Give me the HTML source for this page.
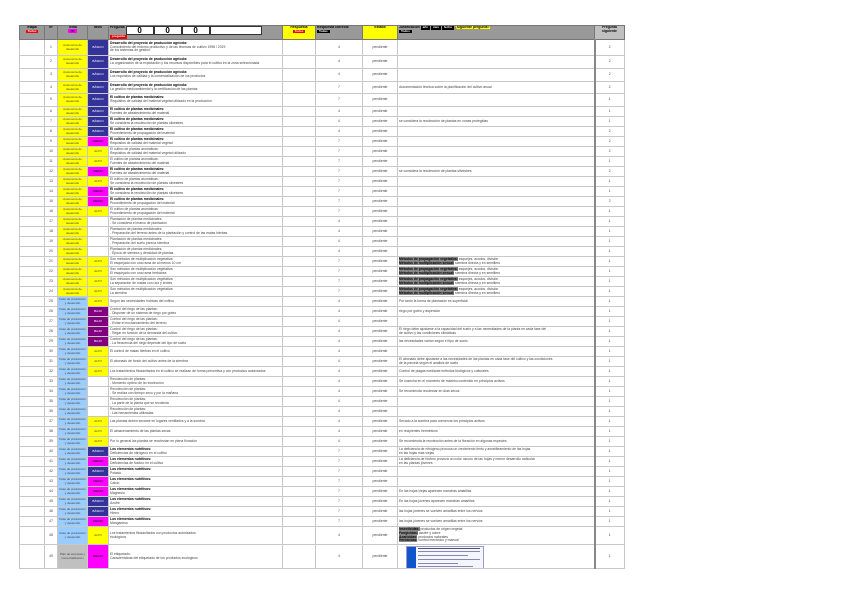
<!DOCTYPE html>
<html><head><meta charset="utf-8">
<style>
body{margin:0;width:848px;height:599px;background:#fff;font-family:"Liberation Sans",sans-serif;overflow:hidden;position:relative}
table{position:absolute;left:19px;top:25px;border-collapse:collapse;table-layout:fixed;border:1px solid #666}
td{border:1px solid #c8c8c8;padding:0 1px;font-size:3.4px;line-height:3.7px;color:#444;overflow:hidden;vertical-align:middle}
td.c{text-align:center}
tr.h td{background:#999;height:13px;color:#000;font-weight:bold;vertical-align:top;border-color:#777;line-height:3.6px}
tr.h td.y{background:#ff0}
tr.h td.g{background:#c0c0c0}
.ty{background:#ff0;text-align:center;font-size:3px}
.tb{background:#99ccff;text-align:center;font-size:3px}
.tg{background:#c0c0c0;text-align:center;font-size:3px}
.nb{background:#333399;color:#fff;text-align:center;font-size:3px}
.nm{background:#ff00ff;color:#000;text-align:center;font-size:3px}
.ny{background:#ff0;text-align:center;font-size:3px}
.np{background:#800080;color:#fff;text-align:center;font-size:3px}
.nw{background:#fff}
td.last{border-left:2px solid #888}
b{color:#000}
td b.j{background:#888}
.k{display:inline-block;background:#000;color:#fff;font-size:3px;padding:0 2px}
.r{display:inline-block;background:#e00;color:#fff;font-size:3px;padding:0 2px}
.bx{display:inline-block;border:1px solid #333;background:#fff;width:26px;height:7px;font-size:8px;line-height:7px;text-align:center;font-weight:bold;vertical-align:top}
</style></head><body>
<table>
<colgroup><col style="width:25px"><col style="width:13px"><col style="width:30px"><col style="width:21px"><col style="width:174px"><col style="width:33px"><col style="width:47px"><col style="width:35px"><col style="width:197px"><col style="width:30px"></colgroup>
<tr class="h"><td class="c">Etapa<br><span class="r">Todos</span></td><td class="c">Nº</td><td class="c">Tema<br><span class="nm" style="padding:0 3px">(T)</span></td><td class="c">Nivel</td><td>Pregunta <span class="bx">0</span><span class="bx">0</span><span class="bx">0</span><span class="bx" style="width:50px"></span><br><span class="r">pregunta</span></td><td class="y c">Respuesta<br><span class="r">Todos</span></td><td>Respuesta correcta<br><span class="k">Todas</span></td><td class="y c">Estado</td><td>Justificación <span class="k">año</span> <span class="k">mes</span> <span class="k">fecha</span> <span style="background:#ff0">¿Siguiente pregunta?</span><br><span class="k">Todos</span></td><td class="g c">Pregunta siguiente</td></tr>
<tr style="height:16px"><td></td><td class="c">1</td><td class="ty">Autonomía de desarrollo</td><td class="nb">BÁSICO</td><td><b>Desarrollo del proyecto de producción agrícola:</b><br>Conocimiento del entorno productivo y de las técnicas de cultivo 1998 / 2019<br>de los sistemas de gestión</td><td></td><td class="c">4</td><td class="c">pendiente</td><td></td><td class="c last">2</td></tr>
<tr style="height:13px"><td></td><td class="c">2</td><td class="ty">Autonomía de desarrollo</td><td class="nb">BÁSICO</td><td><b>Desarrollo del proyecto de producción agrícola:</b><br>La organización de la explotación y los recursos disponibles para el cultivo en la zona seleccionada</td><td></td><td class="c">4</td><td class="c">pendiente</td><td></td><td class="c last">2</td></tr>
<tr style="height:13px"><td></td><td class="c">3</td><td class="ty">Autonomía de desarrollo</td><td class="nb">BÁSICO</td><td><b>Desarrollo del proyecto de producción agrícola:</b><br>Los requisitos de calidad y la comercialización de los productos</td><td></td><td class="c">4</td><td class="c">pendiente</td><td></td><td class="c last">2</td></tr>
<tr style="height:12px"><td></td><td class="c">4</td><td class="ty">Autonomía de desarrollo</td><td class="nb">BÁSICO</td><td><b>Desarrollo del proyecto de producción agrícola:</b><br>La gestión medioambiental y la certificación de las plantas</td><td></td><td class="c">7</td><td class="c">pendiente</td><td>documentación técnica sobre la planificación del cultivo anual</td><td class="c last">2</td></tr>
<tr style="height:13px"><td></td><td class="c">5</td><td class="ty">Autonomía de desarrollo</td><td class="nb">BÁSICO</td><td><b>El cultivo de plantas medicinales:</b><br>Requisitos de calidad del material vegetal utilizado en la producción</td><td></td><td class="c">7</td><td class="c">pendiente</td><td></td><td class="c last">1</td></tr>
<tr style="height:10px"><td></td><td class="c">6</td><td class="ty">Autonomía de desarrollo</td><td class="nb">BÁSICO</td><td><b>El cultivo de plantas medicinales:</b><br>Fuentes de abastecimiento del material</td><td></td><td class="c">4</td><td class="c">pendiente</td><td></td><td class="c last">1</td></tr>
<tr style="height:10px"><td></td><td class="c">7</td><td class="ty">Autonomía de desarrollo</td><td class="nb">BÁSICO</td><td><b>El cultivo de plantas medicinales:</b><br>Se considera la recolección de plantas silvestres</td><td></td><td class="c">4</td><td class="c">pendiente</td><td>se considera la recolección de plantas en zonas protegidas</td><td class="c last">1</td></tr>
<tr style="height:10px"><td></td><td class="c">8</td><td class="ty">Autonomía de desarrollo</td><td class="nb">BÁSICO</td><td><b>El cultivo de plantas medicinales:</b><br>Procedimiento de propagación del material</td><td></td><td class="c">4</td><td class="c">pendiente</td><td></td><td class="c last">2</td></tr>
<tr style="height:10px"><td></td><td class="c">9</td><td class="ty">Autonomía de desarrollo</td><td class="nm">MEDIO</td><td><b>El cultivo de plantas medicinales:</b><br>Requisitos de calidad del material vegetal</td><td></td><td class="c">7</td><td class="c">pendiente</td><td></td><td class="c last">2</td></tr>
<tr style="height:10px"><td></td><td class="c">10</td><td class="ty">Autonomía de desarrollo</td><td class="ny">ALTO</td><td>El cultivo de plantas aromáticas:<br>Requisitos de calidad del material vegetal utilizado</td><td></td><td class="c">7</td><td class="c">pendiente</td><td></td><td class="c last">2</td></tr>
<tr style="height:10px"><td></td><td class="c">11</td><td class="ty">Autonomía de desarrollo</td><td class="ny">ALTO</td><td>El cultivo de plantas aromáticas:<br>Fuentes de abastecimiento del material</td><td></td><td class="c">7</td><td class="c">pendiente</td><td></td><td class="c last">1</td></tr>
<tr style="height:10px"><td></td><td class="c">12</td><td class="ty">Autonomía de desarrollo</td><td class="nm">MEDIO</td><td><b>El cultivo de plantas medicinales:</b><br>Fuentes de abastecimiento del material</td><td></td><td class="c">7</td><td class="c">pendiente</td><td>se considera la recolección de plantas silvestres</td><td class="c last">2</td></tr>
<tr style="height:10px"><td></td><td class="c">13</td><td class="ty">Autonomía de desarrollo</td><td class="ny">ALTO</td><td>El cultivo de plantas aromáticas:<br>Se considera la recolección de plantas silvestres</td><td></td><td class="c">7</td><td class="c">pendiente</td><td></td><td class="c last">1</td></tr>
<tr style="height:10px"><td></td><td class="c">14</td><td class="ty">Autonomía de desarrollo</td><td class="nm">MEDIO</td><td><b>El cultivo de plantas medicinales:</b><br>Se considera la recolección de plantas silvestres</td><td></td><td class="c">7</td><td class="c">pendiente</td><td></td><td class="c last">1</td></tr>
<tr style="height:10px"><td></td><td class="c">15</td><td class="ty">Autonomía de desarrollo</td><td class="nm">MEDIO</td><td><b>El cultivo de plantas medicinales:</b><br>Procedimiento de propagación del material</td><td></td><td class="c">7</td><td class="c">pendiente</td><td></td><td class="c last">2</td></tr>
<tr style="height:10px"><td></td><td class="c">16</td><td class="ty">Autonomía de desarrollo</td><td class="ny">ALTO</td><td>El cultivo de plantas aromáticas:<br>Procedimiento de propagación del material</td><td></td><td class="c">7</td><td class="c">pendiente</td><td></td><td class="c last">1</td></tr>
<tr style="height:10px"><td></td><td class="c">17</td><td class="ty">Autonomía de desarrollo</td><td class="nw"></td><td>Plantación de plantas medicinales:<br>- Se considera el marco de plantación</td><td></td><td class="c">4</td><td class="c">pendiente</td><td></td><td class="c last">1</td></tr>
<tr style="height:10px"><td></td><td class="c">18</td><td class="ty">Autonomía de desarrollo</td><td class="nw"></td><td>Plantación de plantas medicinales:<br>- Preparación del terreno antes de la plantación y control de las malas hierbas</td><td></td><td class="c">4</td><td class="c">pendiente</td><td></td><td class="c last">1</td></tr>
<tr style="height:10px"><td></td><td class="c">19</td><td class="ty">Autonomía de desarrollo</td><td class="nw"></td><td>Plantación de plantas medicinales:<br>- Preparación del suelo para la siembra</td><td></td><td class="c">4</td><td class="c">pendiente</td><td></td><td class="c last">1</td></tr>
<tr style="height:10px"><td></td><td class="c">20</td><td class="ty">Autonomía de desarrollo</td><td class="nw"></td><td>Plantación de plantas medicinales:<br>- Época de siembra y densidad de plantas</td><td></td><td class="c">4</td><td class="c">pendiente</td><td></td><td class="c last">1</td></tr>
<tr style="height:10px"><td></td><td class="c">21</td><td class="ty">Autonomía de desarrollo</td><td class="ny">ALTO</td><td>Son métodos de multiplicación vegetativa:<br>El esquejado con una rama de al menos 10 cm</td><td></td><td class="c">7</td><td class="c">pendiente</td><td><b class="j">Métodos de propagación vegetativa:</b> esquejes, acodos, división<br><b class="j">Métodos de multiplicación sexual:</b> siembra directa y en semillero</td><td class="c last">1</td></tr>
<tr style="height:10px"><td></td><td class="c">22</td><td class="ty">Autonomía de desarrollo</td><td class="ny">ALTO</td><td>Son métodos de multiplicación vegetativa:<br>El esquejado con una rama herbácea</td><td></td><td class="c">7</td><td class="c">pendiente</td><td><b class="j">Métodos de propagación vegetativa:</b> esquejes, acodos, división<br><b class="j">Métodos de multiplicación sexual:</b> siembra directa y en semillero</td><td class="c last">1</td></tr>
<tr style="height:10px"><td></td><td class="c">23</td><td class="ty">Autonomía de desarrollo</td><td class="ny">ALTO</td><td>Son métodos de multiplicación vegetativa:<br>La separación de matas con raíz y brotes</td><td></td><td class="c">7</td><td class="c">pendiente</td><td><b class="j">Métodos de propagación vegetativa:</b> esquejes, acodos, división<br><b class="j">Métodos de multiplicación sexual:</b> siembra directa y en semillero</td><td class="c last">1</td></tr>
<tr style="height:10px"><td></td><td class="c">24</td><td class="ty">Autonomía de desarrollo</td><td class="ny">ALTO</td><td>Son métodos de multiplicación vegetativa:<br>La siembra</td><td></td><td class="c">7</td><td class="c">pendiente</td><td><b class="j">Métodos de propagación vegetativa:</b> esquejes, acodos, división<br><b class="j">Métodos de multiplicación sexual:</b> siembra directa y en semillero</td><td class="c last">1</td></tr>
<tr style="height:10px"><td></td><td class="c">25</td><td class="tb">Fase de producción y desarrollo</td><td class="ny">ALTO</td><td>Según las necesidades hídricas del cultivo</td><td></td><td class="c">4</td><td class="c">pendiente</td><td>Por tanto la forma de plantación es superficial</td><td class="c last">1</td></tr>
<tr style="height:10px"><td></td><td class="c">26</td><td class="tb">Fase de producción y desarrollo</td><td class="np">BAJO</td><td>Control del riego de las plantas:<br>- Disponer de un sistema de riego por goteo</td><td></td><td class="c">4</td><td class="c">pendiente</td><td>riego por goteo y aspersión</td><td class="c last">1</td></tr>
<tr style="height:10px"><td></td><td class="c">27</td><td class="tb">Fase de producción y desarrollo</td><td class="np">BAJO</td><td>Control del riego de las plantas:<br>- Evitar el encharcamiento del terreno</td><td></td><td class="c">4</td><td class="c">pendiente</td><td></td><td class="c last">1</td></tr>
<tr style="height:10px"><td></td><td class="c">28</td><td class="tb">Fase de producción y desarrollo</td><td class="np">BAJO</td><td>Control del riego de las plantas:<br>- Regar en función de la demanda del cultivo</td><td></td><td class="c">4</td><td class="c">pendiente</td><td>El riego debe ajustarse a la capacidad del suelo y a las necesidades de la planta en cada fase del<br>de cultivo y las condiciones climáticas</td><td class="c last">1</td></tr>
<tr style="height:10px"><td></td><td class="c">29</td><td class="tb">Fase de producción y desarrollo</td><td class="np">BAJO</td><td>Control del riego de las plantas:<br>- La frecuencia del riego depende del tipo de suelo</td><td></td><td class="c">4</td><td class="c">pendiente</td><td>las necesidades varían según el tipo de suelo</td><td class="c last">1</td></tr>
<tr style="height:10px"><td></td><td class="c">30</td><td class="tb">Fase de producción y desarrollo</td><td class="ny">ALTO</td><td>El control de malas hierbas en el cultivo</td><td></td><td class="c">4</td><td class="c">pendiente</td><td></td><td class="c last">1</td></tr>
<tr style="height:10px"><td></td><td class="c">31</td><td class="tb">Fase de producción y desarrollo</td><td class="ny">ALTO</td><td>El abonado de fondo del cultivo antes de la siembra</td><td></td><td class="c">4</td><td class="c">pendiente</td><td>El abonado debe ajustarse a las necesidades de las plantas en cada fase del cultivo y las condiciones<br>de la parcela según el análisis de suelo</td><td class="c last">1</td></tr>
<tr style="height:10px"><td></td><td class="c">32</td><td class="tb">Fase de producción y desarrollo</td><td class="ny">ALTO</td><td>Los tratamientos fitosanitarios en el cultivo se realizan de forma preventiva y con productos autorizados</td><td></td><td class="c">4</td><td class="c">pendiente</td><td>Control de plagas mediante métodos biológicos y culturales</td><td class="c last">1</td></tr>
<tr style="height:10px"><td></td><td class="c">33</td><td class="tb">Fase de producción y desarrollo</td><td class="nw"></td><td>Recolección de plantas:<br>- Momento óptimo de la recolección</td><td></td><td class="c">4</td><td class="c">pendiente</td><td>Se cosecha en el momento de máximo contenido en principios activos</td><td class="c last">1</td></tr>
<tr style="height:10px"><td></td><td class="c">34</td><td class="tb">Fase de producción y desarrollo</td><td class="nw"></td><td>Recolección de plantas:<br>- Se realiza con tiempo seco y por la mañana</td><td></td><td class="c">4</td><td class="c">pendiente</td><td>Se recomienda recolectar en días secos</td><td class="c last">1</td></tr>
<tr style="height:10px"><td></td><td class="c">35</td><td class="tb">Fase de producción y desarrollo</td><td class="nw"></td><td>Recolección de plantas:<br>- La parte de la planta que se recolecta</td><td></td><td class="c">4</td><td class="c">pendiente</td><td></td><td class="c last">1</td></tr>
<tr style="height:10px"><td></td><td class="c">36</td><td class="tb">Fase de producción y desarrollo</td><td class="nw"></td><td>Recolección de plantas:<br>- Las herramientas utilizadas</td><td></td><td class="c">4</td><td class="c">pendiente</td><td></td><td class="c last">1</td></tr>
<tr style="height:10px"><td></td><td class="c">37</td><td class="tb">Fase de producción y desarrollo</td><td class="ny">ALTO</td><td>Las plantas deben secarse en lugares ventilados y a la sombra</td><td></td><td class="c">4</td><td class="c">pendiente</td><td>Secado a la sombra para conservar los principios activos</td><td class="c last">1</td></tr>
<tr style="height:10px"><td></td><td class="c">38</td><td class="tb">Fase de producción y desarrollo</td><td class="ny">ALTO</td><td>El almacenamiento de las plantas secas</td><td></td><td class="c">4</td><td class="c">pendiente</td><td>en recipientes herméticos</td><td class="c last">1</td></tr>
<tr style="height:10px"><td></td><td class="c">39</td><td class="tb">Fase de producción y desarrollo</td><td class="ny">ALTO</td><td>Por lo general las plantas se recolectan en plena floración</td><td></td><td class="c">4</td><td class="c">pendiente</td><td>Se recomienda la recolección antes de la floración en algunas especies</td><td class="c last">1</td></tr>
<tr style="height:10px"><td></td><td class="c">40</td><td class="tb">Fase de producción y desarrollo</td><td class="nb">BÁSICO</td><td><b>Los elementos nutritivos:</b><br>Deficiencias de nitrógeno en el cultivo</td><td></td><td class="c">7</td><td class="c">pendiente</td><td>La deficiencia de nitrógeno provoca un crecimiento lento y amarilleamiento de las hojas<br>en las hojas más viejas</td><td class="c last">1</td></tr>
<tr style="height:10px"><td></td><td class="c">41</td><td class="tb">Fase de producción y desarrollo</td><td class="nm">MEDIO</td><td><b>Los elementos nutritivos:</b><br>Deficiencias de fósforo en el cultivo</td><td></td><td class="c">7</td><td class="c">pendiente</td><td>La deficiencia de fósforo provoca un color oscuro de las hojas y menor desarrollo radicular<br>en las plantas jóvenes</td><td class="c last">1</td></tr>
<tr style="height:10px"><td></td><td class="c">42</td><td class="tb">Fase de producción y desarrollo</td><td class="nb">BÁSICO</td><td><b>Los elementos nutritivos:</b><br>Potasio</td><td></td><td class="c">7</td><td class="c">pendiente</td><td></td><td class="c last">1</td></tr>
<tr style="height:10px"><td></td><td class="c">43</td><td class="tb">Fase de producción y desarrollo</td><td class="nm">MEDIO</td><td><b>Los elementos nutritivos:</b><br>Calcio</td><td></td><td class="c">7</td><td class="c">pendiente</td><td></td><td class="c last">1</td></tr>
<tr style="height:10px"><td></td><td class="c">44</td><td class="tb">Fase de producción y desarrollo</td><td class="nm">MEDIO</td><td><b>Los elementos nutritivos:</b><br>Magnesio</td><td></td><td class="c">7</td><td class="c">pendiente</td><td>En las hojas viejas aparecen manchas amarillas</td><td class="c last">1</td></tr>
<tr style="height:10px"><td></td><td class="c">45</td><td class="tb">Fase de producción y desarrollo</td><td class="nb">BÁSICO</td><td><b>Los elementos nutritivos:</b><br>Azufre</td><td></td><td class="c">7</td><td class="c">pendiente</td><td>En las hojas jóvenes aparecen manchas amarillas</td><td class="c last">1</td></tr>
<tr style="height:10px"><td></td><td class="c">46</td><td class="tb">Fase de producción y desarrollo</td><td class="nb">BÁSICO</td><td><b>Los elementos nutritivos:</b><br>Hierro</td><td></td><td class="c">7</td><td class="c">pendiente</td><td>las hojas jóvenes se vuelven amarillas entre los nervios</td><td class="c last">1</td></tr>
<tr style="height:10px"><td></td><td class="c">47</td><td class="tb">Fase de producción y desarrollo</td><td class="nm">MEDIO</td><td><b>Los elementos nutritivos:</b><br>Manganeso</td><td></td><td class="c">7</td><td class="c">pendiente</td><td>las hojas jóvenes se vuelven amarillas entre los nervios</td><td class="c last">1</td></tr>
<tr style="height:18px"><td></td><td class="c">48</td><td class="tb">Fase de producción y desarrollo</td><td class="ny">ALTO</td><td>Los tratamientos fitosanitarios con productos autorizados<br>ecológicos</td><td></td><td class="c">4</td><td class="c">pendiente</td><td><b class="j">Insecticidas:</b> productos de origen vegetal<br><b class="j">Fungicidas:</b> azufre y cobre<br><b class="j">Acaricidas:</b> productos naturales<br><b class="j">Herbicidas:</b> control mecánico y manual</td><td class="c last">1</td></tr>
<tr style="height:24px"><td></td><td class="c">49</td><td class="tg">Plan de empresa y comercialización</td><td class="nm">MEDIO</td><td>El etiquetado:<br>Características del etiquetado de los productos ecológicos</td><td></td><td class="c">4</td><td class="c">pendiente</td><td style="padding-left:8px"><div style="position:relative;width:76px;height:21px;border-top:1px solid #99c;border-left:1px solid #99c;border-right:1px solid #99c;background:#f4f6ff;overflow:hidden"><div style="position:absolute;left:0;top:0;width:9px;height:21px;background:#1155cc"></div><div style="position:absolute;left:11px;top:1px;width:62px;height:1px;background:#557"></div><div style="position:absolute;left:11px;top:4px;width:62px;height:1px;background:#88a"></div><div style="position:absolute;left:11px;top:8px;width:50px;height:1px;background:#88a"></div><div style="position:absolute;left:11px;top:12px;width:62px;height:1px;background:#88a"></div><div style="position:absolute;left:11px;top:16px;width:40px;height:1px;background:#88a"></div><div style="position:absolute;left:11px;top:19px;width:55px;height:1px;background:#88a"></div></div></td><td class="c last">1</td></tr>
</table>
</body></html>
